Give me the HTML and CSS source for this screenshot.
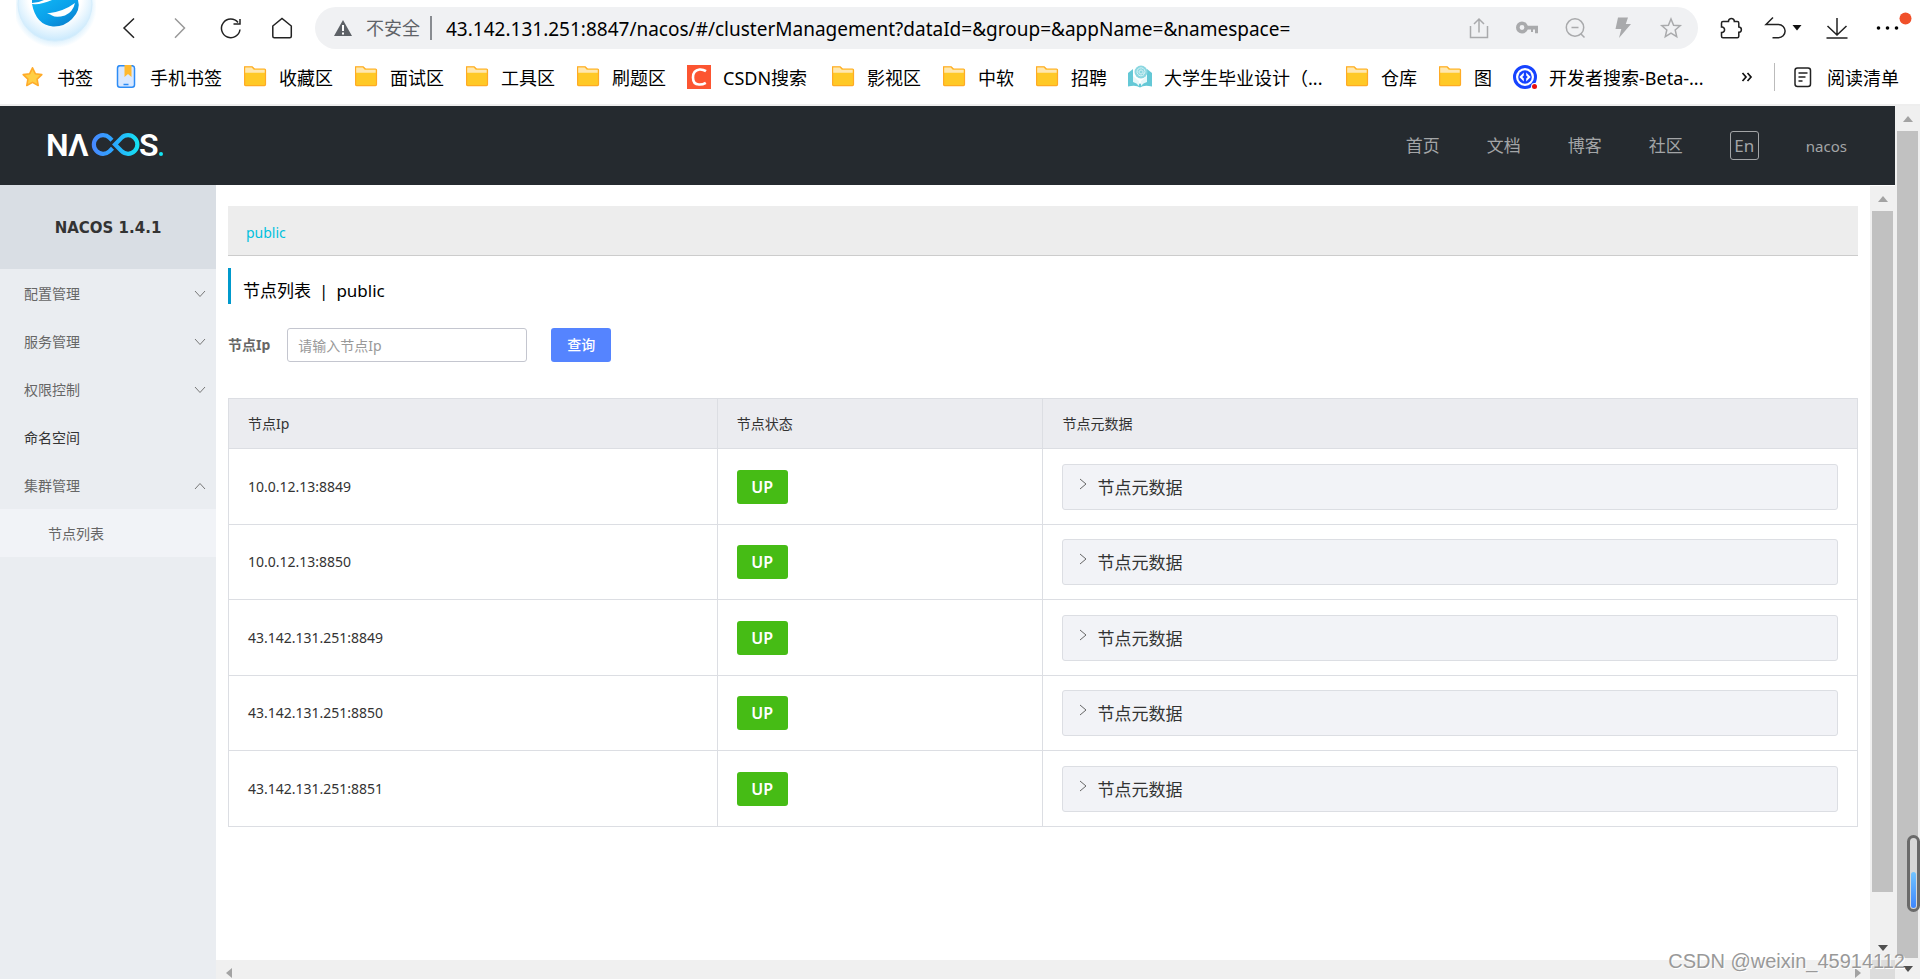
FILE: index.html
```html
<!DOCTYPE html>
<html lang="zh-CN">
<head>
<meta charset="utf-8">
<title>Nacos</title>
<link rel="stylesheet" href="styles.css">
</head>
<body>
<svg class="defs" aria-hidden="true">
  <defs>
    <symbol id="folder" viewBox="0 0 24 24">
      <path d="M1.600 1.800h7.600l2.200 2.200h10.100q1 0 1 1v14.600q0 1-1 1H2.600q-1 0-1-1z" fill="#ffc926" stroke="#ffab24" stroke-width="1.200"/>
      <path d="M2.200 2.600h6.500l2 2.200h11v3H2.200z" fill="#ffe7b0"/>
    </symbol>
    <symbol id="down" viewBox="0 0 12 8"><path d="M1 1l5 5.500L11 1" fill="none" stroke="#777" stroke-width="1"/></symbol>
    <symbol id="up" viewBox="0 0 12 8"><path d="M1 7l5-5.500L11 7" fill="none" stroke="#777" stroke-width="1"/></symbol>
    <symbol id="right" viewBox="0 0 8 12"><path d="M1 1l6 5-6 5" fill="none" stroke="#666" stroke-width="1"/></symbol>
  </defs>
</svg>

<header class="browser">
  <div class="toolbar">
    <svg class="brand" viewBox="0 0 80 50" aria-label="浏览器">
      <defs>
        <radialGradient id="halo" cx=".5" cy=".4" r=".6"><stop offset=".6" stop-color="#fff"/><stop offset="1" stop-color="#c9e9fd"/></radialGradient>
        <radialGradient id="glow"><stop offset=".8" stop-color="#d8effd"/><stop offset="1" stop-color="#fff"/></radialGradient>
        <linearGradient id="ebody" x1="0" y1="0" x2="1" y2="1"><stop offset="0" stop-color="#12b8f5"/><stop offset=".5" stop-color="#0aa0ea"/><stop offset="1" stop-color="#0b76c4"/></linearGradient>
      </defs>
      <circle cx="39" cy="6" r="42" fill="url(#glow)"/>
      <circle cx="39" cy="4" r="37" fill="url(#halo)" stroke="#d5edfc"/>
      <path d="M16 4Q25 5 36 0H62Q65 10 56 19Q48 27 37 26.500Q20 25 16 4Z" fill="url(#ebody)"/>
      <path d="M16 0H28Q22 3 16 3Z" fill="#0e9fe8"/>
      <path d="M31 13.500Q47 12 59 3Q57 12 49 15.500Q40 18 36 15.500Q34 14 31 13.500Z" fill="#fff"/>
    </svg>
    <div class="nav-buttons">
      <button aria-label="后退"><svg viewBox="0 0 24 24"><path d="M17 2.500L7 12l10 9.800" class="line"/></svg></button>
      <button aria-label="前进"><svg viewBox="0 0 24 24"><path d="M7 2.500L16.500 12 7 21.800" class="line pale"/></svg></button>
      <button aria-label="刷新"><svg viewBox="0 0 24 24"><path d="M21 13.500A9.300 9.300 0 1 1 19 6.500M14.500 8H21V3" class="line"/></svg></button>
      <button aria-label="主页"><svg viewBox="0 0 24 24"><path d="M2.800 10L12 2.500l9.300 7.500v10.300q0 1.500-1.500 1.500H4.300q-1.500 0-1.500-1.500z" class="line"/></svg></button>
    </div>
    <div class="address">
      <svg class="warn" viewBox="0 0 20 18"><path d="M10 1l9 16H1z" fill="#5d6166"/><path d="M10 6v6M10 13.500v2" stroke="#fff" stroke-width="2"/></svg>
      <span class="insecure">不安全</span>
      <input class="url" aria-label="地址" value="43.142.131.251:8847/nacos/#/clusterManagement?dataId=&amp;group=&amp;appName=&amp;namespace=">
      <div class="address-icons">
        <button aria-label="分享"><svg viewBox="0 0 24 24"><path d="M3.500 10v11.500h17V10M12 16.500V3M7 8l5-5 5 5" class="thin"/></svg></button>
        <button aria-label="密码"><svg viewBox="0 0 24 24"><circle cx="7" cy="11.500" r="4.200" fill="none" stroke="#a9aaac" stroke-width="3.600"/><path d="M12 9.800h11v7.400h-3V13.500h-2V16h-2v-2.500h-4z" fill="#a9aaac"/></svg></button>
        <button aria-label="缩放"><svg viewBox="0 0 24 24"><circle cx="12" cy="11.500" r="8.700" class="thin"/><path d="M8.500 11.500h7M18 18l3.500 3.500" class="thin"/></svg></button>
        <button aria-label="加速"><svg viewBox="0 0 24 24"><path d="M7 1.500h10L14.800 8H20L8 22l2.300-9H4.500z" fill="#a9aaac"/></svg></button>
        <button aria-label="收藏"><svg viewBox="0 0 24 24"><path d="M12 3l2.600 6.200 6.600.5-5 4.300 1.500 6.600-5.700-3.500-5.700 3.500L7.800 14l-5-4.300 6.600-.5z" class="thin"/></svg></button>
      </div>
    </div>
    <div class="tools">
      <button aria-label="扩展"><svg viewBox="0 0 24 24"><path d="M5.500 5.500H9.500V4.800a3 3 0 0 1 5.800 0v.7h3q1.500 0 1.500 1.500v4h.4a2.700 2.700 0 0 1 0 5.300h-.4v3.900q0 1.500-1.500 1.500H4q-1.500 0-1.500-1.500v-3.700h.8a2.800 2.800 0 0 0 0-5.500h-.8V7q0-1.500 1.500-1.500z" class="line"/></svg></button>
      <button class="wide" aria-label="撤销"><svg viewBox="0 0 40 24"><path d="M9 1.500L2 8.500h12.500a6.600 6.600 0 0 1 0 13.200H8.500" class="line"/><path d="M28.500 9h9L33 14.500z" fill="#111"/></svg></button>
      <button aria-label="下载"><svg viewBox="0 0 24 24"><path d="M12 2v17M2.500 10l9.500 9 9.500-9M1.500 22h21" class="line"/></svg></button>
      <button class="wide" aria-label="更多"><svg viewBox="0 0 40 24"><circle cx="8.500" cy="12" r="1.800"/><circle cx="17.500" cy="12" r="1.800"/><circle cx="26.500" cy="12" r="1.800"/><circle cx="35.500" cy="2.500" r="6" fill="#f0502a"/></svg></button>
    </div>
  </div>
  <nav class="bookmarks" aria-label="书签栏">
    <a href="#"><svg viewBox="0 0 24 24"><path d="M11.500 2.800l2.800 5.900 6.500.9-4.700 4.500 1.100 6.400-5.700-3.100-5.700 3.100 1.100-6.400-4.700-4.500 6.500-.9z" fill="#ffcf45" stroke="#ffab2a" stroke-width="1.600" stroke-linejoin="round"/></svg><span>书签</span></a>
    <a href="#"><svg viewBox="0 0 24 24"><rect x="3.500" y=".7" width="17" height="21.600" rx="2.500" fill="#d8e8ff" stroke="#2d8cf5" stroke-width="1.500"/><path d="M10.500 0h7v12L14 9l-3.500 3z" fill="#ffb92e"/><path d="M9.500 19.500h5" stroke="#2d8cf5" stroke-width="1.500"/></svg><span>手机书签</span></a>
    <a href="#"><svg><use href="#folder"/></svg><span>收藏区</span></a>
    <a href="#"><svg><use href="#folder"/></svg><span>面试区</span></a>
    <a href="#"><svg><use href="#folder"/></svg><span>工具区</span></a>
    <a href="#"><svg><use href="#folder"/></svg><span>刷题区</span></a>
    <a href="#"><svg viewBox="0 0 24 24"><path d="M0 0h24v24H0z" fill="#fc5531"/><path d="M19 6.200Q16 4.200 12.500 4.500Q6 5.200 6 12.500Q6 19.500 12 19.500Q15.500 19.700 18.800 17.800" fill="none" stroke="#fff" stroke-width="2.600"/></svg><span class="medium">CSDN搜索</span></a>
    <a href="#"><svg><use href="#folder"/></svg><span>影视区</span></a>
    <a href="#"><svg><use href="#folder"/></svg><span>中软</span></a>
    <a href="#"><svg><use href="#folder"/></svg><span>招聘</span></a>
    <a href="#"><svg viewBox="0 0 24 24"><path d="M0 8l5-4v10l7 5 7-5V4l5 4v13.500q-8-2-12 1-4-3-12-1z" fill="#64c8d6"/><path d="M5 11v6q4 1 6 4v-5zM19 11v6q-4 1-6 4v-5z" fill="#e8f8fa"/><circle cx="13" cy="7" r="6.500" fill="#8bd7e1"/><path d="M16 9.500a4 4 0 1 1 1-3q0 3-2 2.500M13 5a2 2 0 1 0 .1 0" fill="none" stroke="#d8f3f6"/></svg><span class="long">大学生毕业设计（...</span></a>
    <a href="#"><svg><use href="#folder"/></svg><span>仓库</span></a>
    <a href="#"><svg><use href="#folder"/></svg><span>图</span></a>
    <a href="#"><svg viewBox="0 0 24 24"><circle cx="12" cy="12" r="10.500" fill="none" stroke="#1643ff" stroke-width="3"/><circle cx="12" cy="12" r="6.800" fill="#1643ff"/><path d="M10.800 7.500v3L9.200 12l1.600 1.500v3L6.300 12zM13.200 7.500v3l1.600 1.500-1.600 1.500v3l4.500-4.500z" fill="#fff"/><circle cx="21.500" cy="21.500" r="3.400" fill="#fff"/><circle cx="21.500" cy="21.500" r="2.500" fill="#e80f0f"/></svg><span class="long">开发者搜索-Beta-...</span></a>
    <button class="overflow" aria-label="更多书签"><svg viewBox="0 0 12 12"><path d="M1.500 2l3.500 4-3.500 4M6.500 2L10 6l-3.500 4" fill="none" stroke="#111" stroke-width="1.700"/></svg></button>
    <a class="reading" href="#"><svg viewBox="0 0 24 24"><rect x="4" y="3" width="15.500" height="18.500" rx="2.500" class="line"/><path d="M7.500 8h9M7.500 12h7M7.500 16h4" class="line"/></svg><span>阅读清单</span></a>
  </nav>
</header>

<div class="viewport">
  <div class="page">
    <header class="topbar">
      <a class="logo" href="#" aria-label="NACOS">
        <svg viewBox="-4 -8 124 42">
          <defs><linearGradient id="inf" gradientUnits="userSpaceOnUse" x1="43" y1="0" x2="91" y2="0"><stop offset="0" stop-color="#4a86ff"/><stop offset=".5" stop-color="#2aa9ff"/><stop offset="1" stop-color="#14e4f2"/></linearGradient></defs>
          <text class="logo-text" x="-2" y="23">N</text>
          <text class="logo-text" x="20" y="23">Λ</text>
          <path d="M64 7.200L61.500 4.700A9.300 9.300 0 1 0 61.500 18.300L64.500 15.200M67 11.500L73.500 4.900A9.300 9.300 0 1 1 73.500 18.100z" fill="none" stroke="url(#inf)" stroke-width="4.200"/>
          <text class="logo-text" x="91" y="23">S</text>
          <circle cx="113" cy="21" r="2" fill="#14e4f2"/>
        </svg>
      </a>
      <nav class="topnav">
        <a href="#">首页</a><a href="#">文档</a><a href="#">博客</a><a href="#">社区</a>
        <button class="lang">En</button>
        <a class="user" href="#">nacos</a>
      </nav>
    </header>
    <div class="body">
      <aside class="sidebar">
        <h1>NACOS 1.4.1</h1>
        <button>配置管理<svg><use href="#down"/></svg></button>
        <button>服务管理<svg><use href="#down"/></svg></button>
        <button>权限控制<svg><use href="#down"/></svg></button>
        <a class="plain" href="#">命名空间</a>
        <button>集群管理<svg><use href="#up"/></svg></button>
        <a class="sub" href="#">节点列表</a>
      </aside>
      <div class="frame">
        <div class="frame-row">
          <main>
            <div class="namespaces"><a href="#">public</a></div>
            <h2>节点列表<span class="bar">|</span>public</h2>
            <form class="filter">
              <label for="ip">节点Ip</label>
              <input id="ip" placeholder="请输入节点Ip">
              <button type="button">查询</button>
            </form>
            <table>
              <thead><tr><th class="c-ip">节点Ip</th><th class="c-state">节点状态</th><th>节点元数据</th></tr></thead>
              <tbody>
                <tr><td>10.0.12.13:8849</td><td><span class="tag">UP</span></td><td><button class="meta"><svg><use href="#right"/></svg>节点元数据</button></td></tr>
                <tr><td>10.0.12.13:8850</td><td><span class="tag">UP</span></td><td><button class="meta"><svg><use href="#right"/></svg>节点元数据</button></td></tr>
                <tr><td>43.142.131.251:8849</td><td><span class="tag">UP</span></td><td><button class="meta"><svg><use href="#right"/></svg>节点元数据</button></td></tr>
                <tr><td>43.142.131.251:8850</td><td><span class="tag">UP</span></td><td><button class="meta"><svg><use href="#right"/></svg>节点元数据</button></td></tr>
                <tr><td>43.142.131.251:8851</td><td><span class="tag">UP</span></td><td><button class="meta"><svg><use href="#right"/></svg>节点元数据</button></td></tr>
              </tbody>
            </table>
          </main>
          <div class="vscroll inner"><i class="arrow up"></i><i class="thumb"></i><i class="arrow down"></i></div>
        </div>
        <div class="hscroll"><i class="arrow left"></i><i class="arrow right"></i><i class="corner"></i></div>
      </div>
    </div>
  </div>
  <div class="vscroll outer"><i class="arrow up"></i><i class="thumb"></i><i class="arrow down"></i></div>
</div>
<div class="gauge"><i></i></div>
<div class="watermark">CSDN @weixin_45914112</div>
</body>
</html>
```
FILE: styles.css
```css
* { box-sizing: border-box; }
body {
  margin: 0;
  height: 100vh;
  display: flex;
  flex-direction: column;
  position: relative;
  overflow: hidden;
  background: #fff;
  color: #333;
  font: 14px/20px "Noto Sans", "Noto Sans CJK SC", sans-serif;
}
button { border: 0; padding: 0; background: none; font: inherit; color: inherit; }
a { color: inherit; text-decoration: none; }
svg { display: block; flex: none; }
.defs { position: absolute; width: 0; height: 0; }
.line { fill: none; stroke: #222; stroke-width: 1.5; }
.pale { stroke: #999; }
.thin { fill: none; stroke: #a9aaac; stroke-width: 1.5; }

/* Browser chrome */
.browser { flex: none; height: 106px; border-bottom: 2px solid #eee; }
.toolbar { display: flex; align-items: flex-start; height: 50px; padding: 0 10px 0 16px; }
.brand { width: 80px; height: 50px; }
.nav-buttons { display: flex; gap: 27px; padding: 16px 21px 0; }
.nav-buttons svg, .address-icons svg, .tools svg, .bookmarks svg { width: 24px; height: 24px; }
.address {
  flex: 1;
  display: flex;
  align-items: center;
  height: 42px;
  margin-top: 7px;
  padding: 0 15px 0 18px;
  border-radius: 21px;
  background: #f0f1f3;
}
.warn { width: 20px; height: 18px; }
.insecure { margin-left: 13px; padding-right: 10px; border-right: 2px solid #888b90; font-size: 18px; line-height: 24px; color: #5f6368; }
.url { flex: 1; min-width: 0; margin-left: 14px; padding: 2px 0 0; border: 0; background: none; color: #000; font: 19px/28px "Noto Sans", sans-serif; }
.address-icons { display: flex; gap: 24px; }
.tools { display: flex; gap: 21px; padding: 16px 0 0 21px; }
.tools .wide svg { width: 40px; overflow: visible; }
.bookmarks { display: flex; align-items: center; gap: 21px; height: 54px; padding: 0 21px; font-size: 18px; line-height: 26px; color: #000; white-space: nowrap; }
.bookmarks a { display: flex; align-items: center; gap: 12px; }
.bookmarks span { padding-top: 2px; }
.bookmarks .medium { min-width: 87px; }
.bookmarks .long { min-width: 160px; }
.bookmarks .overflow { margin-left: auto; }
.bookmarks .overflow svg { width: 12px; height: 12px; }
.bookmarks .reading { padding-left: 16px; border-left: 1px solid #bbb; }

/* Page */
.viewport { flex: 1; display: flex; min-height: 0; }
.page { flex: 1; display: flex; flex-direction: column; min-width: 0; }
.topbar { flex: none; display: flex; align-items: center; justify-content: space-between; height: 79px; padding: 0 48px 0 44px; background: #252a2f; color: #a3a5a7; font-size: 17px; }
.logo svg { width: 124px; height: 42px; }
.logo-text { font: 600 32px Roboto, sans-serif; fill: #fff; }
.topnav { display: flex; align-items: center; gap: 47px; }
.lang { width: 29px; height: 29px; border: 1px solid #a3a5a7; border-radius: 3px; line-height: 26px; }
.user { font-size: 15px; }
.body { flex: 1; display: flex; min-height: 0; }

.sidebar { flex: none; width: 216px; background: #eaedf1; color: #666; }
.sidebar h1 { margin: 0; padding-top: 2px; background: #d9dee4; color: #333; font: 700 15px/82px "DejaVu Sans", sans-serif; text-align: center; }
.sidebar button, .sidebar a { display: flex; align-items: center; justify-content: space-between; width: 100%; height: 48px; padding: 2px 10px 0 24px; }
.sidebar svg { width: 12px; height: 8px; }
.sidebar .plain { color: #333; }
.sidebar .sub { padding-left: 48px; background: #f1f3f7; }

.frame { flex: 1; display: flex; flex-direction: column; min-width: 0; }
.frame-row { flex: 1; display: flex; min-height: 0; }
main { flex: 1; padding: 21px 12px 0; }
.namespaces { height: 50px; padding: 0 18px; border-bottom: 1px solid #ccc; background: #ededed; color: #00c1de; line-height: 54px; }
h2 { height: 36px; margin: 12px 0 24px; padding: 10px 0 0 12px; border-left: 3px solid #09c; color: #000; font-size: 17px; font-weight: 400; line-height: 26px; }
.bar { margin: 0 8px; }
.filter { display: flex; align-items: center; margin-bottom: 36px; }
.filter label { font-weight: 700; color: #666; margin-right: 17px; }
.filter input { width: 240px; height: 34px; padding: 0 10px; border: 1px solid #c4c6cf; border-radius: 3px; font: inherit; }
.filter input::placeholder { color: #999; }
.filter button { width: 60px; height: 34px; margin-left: 24px; border-radius: 3px; background: #5584ff; color: #fff; font-weight: 500; }

table { width: 100%; border-collapse: collapse; table-layout: fixed; }
th, td { padding: 0 19px; border: 1px solid #dcdee3; text-align: left; font-weight: 400; }
th { height: 50px; background: #ebecf0; }
tbody tr { height: 75px; }
tbody tr:nth-child(odd) { height: 76px; }
.c-ip { width: 30%; }
.c-state { width: 20%; }
.tag { display: block; width: 51px; height: 34px; border-radius: 3px; background: #46bc15; color: #fff; font-size: 16px; font-weight: 600; line-height: 34px; text-align: center; }
.meta { display: flex; align-items: center; gap: 10px; width: 100%; height: 46px; padding: 2px 16px 0; border: 1px solid #dcdee3; border-radius: 3px; background: #f2f3f7; font-size: 17px; }
.meta svg { width: 8px; height: 12px; margin-bottom: 8px; }

/* Scrollbars */
.vscroll { flex: none; display: flex; flex-direction: column; align-items: center; width: 25px; background: #f0f0f0; }
.vscroll .thumb { width: 21px; background: #c1c1c1; flex: 1; }
.inner { margin-top: 1px; }
.inner .thumb { flex: 0 1 88%; }
.inner .down { margin-top: auto; }
.arrow { display: flex; align-items: center; justify-content: center; flex: none; width: 25px; height: 25px; }
.outer .down { height: 21px; }
.arrow::before { content: ""; border: 5px solid transparent; }
.up::before { border-width: 0 5px 6px; border-bottom-color: #a3a3a3; }
.down::before { border-width: 6px 5px 0; border-top-color: #505050; }
.left::before { border-width: 5px 6px 5px 0; border-right-color: #a3a3a3; }
.right::before { border-width: 5px 0 5px 6px; border-left-color: #a3a3a3; }
.hscroll { flex: none; display: flex; height: 19px; background: #f0f0f0; }
.hscroll .right { margin-left: auto; }
.corner { width: 25px; background: #dcdcdc; }

/* Overlays */
.gauge { position: absolute; right: 0; bottom: 67px; display: flex; align-items: flex-end; justify-content: center; width: 13px; height: 77px; padding-bottom: 1px; border: 3px solid #6a6a6a; border-radius: 7px; background: #d8d8d8; }
.gauge i { width: 5px; height: 36px; border-radius: 3px; background: linear-gradient(#72c4ff, #3d86ff); }
.watermark { position: absolute; right: 15px; bottom: 6px; font: 20px/24px "Liberation Sans", sans-serif; color: #999; text-shadow: 1px 1px 0 #fff; }
```
